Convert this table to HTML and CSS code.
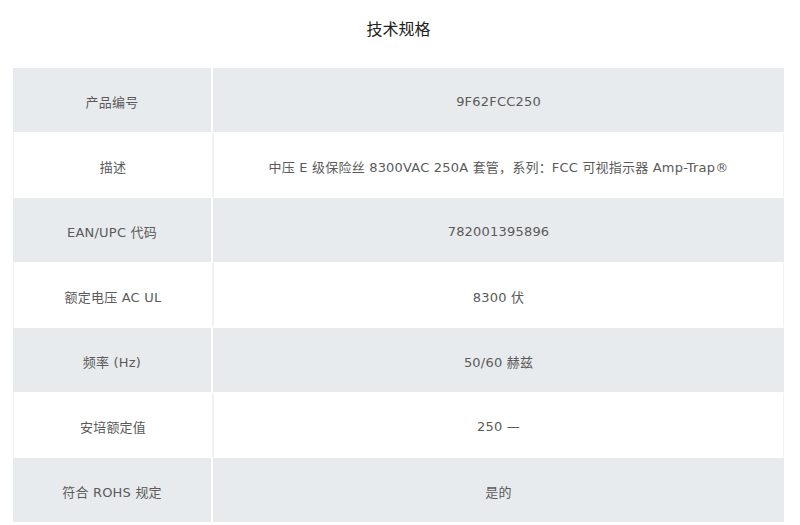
FILE: index.html
```html
<!DOCTYPE html>
<html lang="zh-CN">
<head>
<meta charset="utf-8">
<title>技术规格</title>
<link rel="stylesheet" href="styles.css">
</head>
<body>
<div class="page">
  <h2 class="title">技术规格</h2>
  <div class="spec">
    <div class="row shade"><div class="cell">产品编号</div><div class="cell">9F62FCC250</div></div>
    <div class="row plain"><div class="cell">描述</div><div class="cell">中压 E 级保险丝 8300VAC 250A 套管，系列：FCC 可视指示器 Amp-Trap®</div></div>
    <div class="row shade"><div class="cell">EAN/UPC 代码</div><div class="cell">782001395896</div></div>
    <div class="row plain"><div class="cell">额定电压 AC UL</div><div class="cell">8300 伏</div></div>
    <div class="row shade"><div class="cell">频率 (Hz)</div><div class="cell">50/60 赫兹</div></div>
    <div class="row plain"><div class="cell">安培额定值</div><div class="cell">250 —</div></div>
    <div class="row shade"><div class="cell">符合 ROHS 规定</div><div class="cell">是的</div></div>
  </div>
</div>
</body>
</html>
```
FILE: styles.css
```css
html, body {
  margin: 0;
  padding: 0;
  background: #ffffff;
}
body {
  font-family: "DejaVu Sans", "Noto Sans CJK SC", sans-serif;
  color: #5a5a5a;
}
.page {
  padding: 0 16px 0 13px;
}
.title {
  margin: 0;
  padding-top: 18px;
  height: 50px;
  line-height: 20px;
  font-size: 16px;
  font-weight: normal;
  color: #222;
  text-align: center;
  font-family: "Noto Sans CJK SC", sans-serif;
}
.spec {
  width: 771px;
  display: flex;
  flex-direction: column;
  gap: 1px;
}
.row {
  display: grid;
  grid-template-columns: 198px 1fr;
  column-gap: 2px;
  height: 64px;
}
.row.plain {
  background: #f1f2f4;
  padding: 0 1px;
}
.row.plain .cell {
  background: #ffffff;
}
.row.plain .cell:first-child {
  margin-left: 0;
}
.cell {
  display: flex;
  align-items: center;
  justify-content: center;
  padding-top: 2px;
  font-size: 13px;
  letter-spacing: 0.2px;
  text-align: center;
}
.row.shade .cell {
  background: #e8ebee;
}
```
